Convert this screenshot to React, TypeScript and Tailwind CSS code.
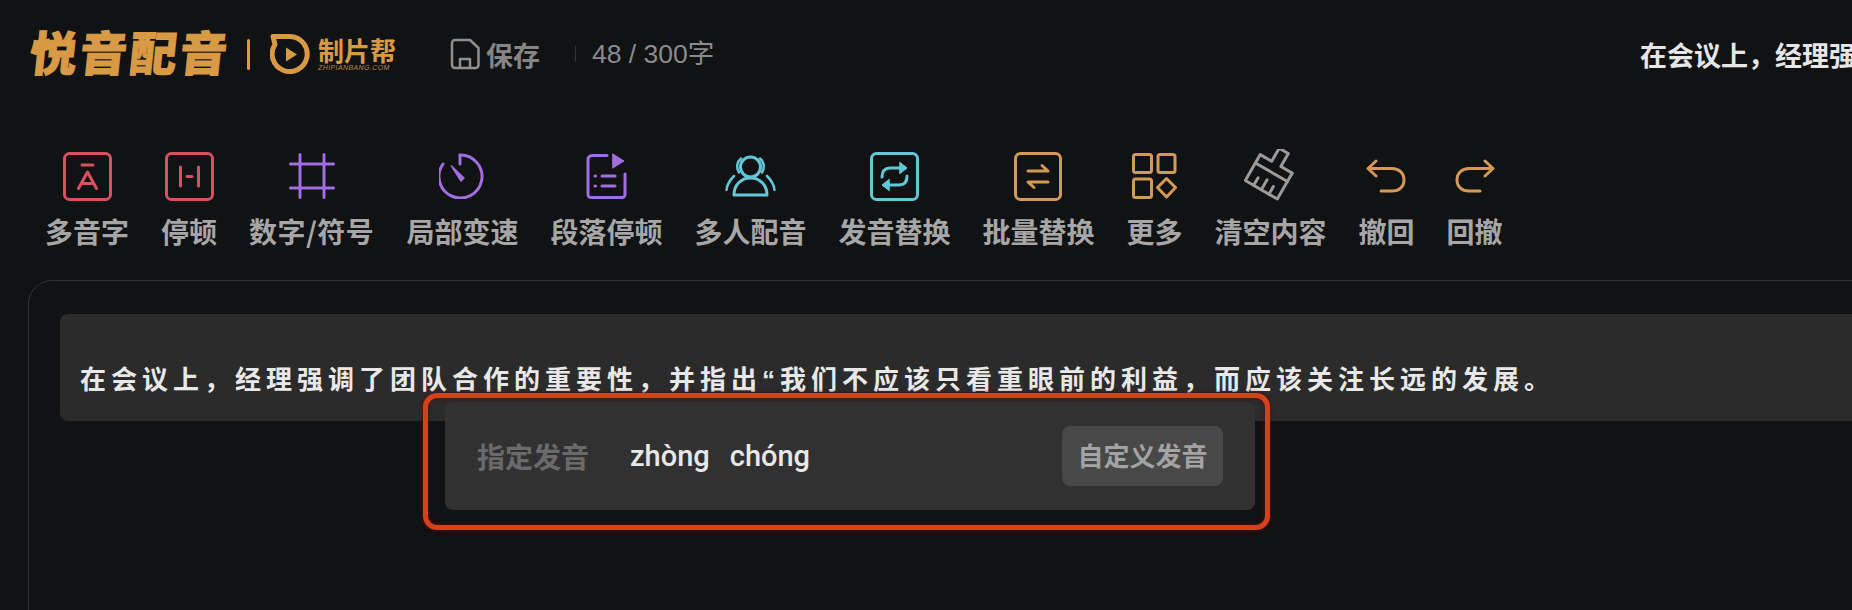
import React from "react";

const S = ({ w, h, vb, children, sw = 3, c }: { w: number; h: number; vb: string; children: React.ReactNode; sw?: number; c: string }) => (
  <svg width={w} height={h} viewBox={vb} fill="none" stroke={c} strokeWidth={sw} strokeLinecap="round" strokeLinejoin="round" className="shrink-0">
    {children}
  </svg>
);

const red = "#d9505f";
const purple = "#a06ee0";
const cyan = "#62c8d8";
const orange = "#d49a55";
const gray = "#9a9a9a";

const icons: Record<string, React.ReactNode> = {
  a: (
    <S w={49} h={49} vb="0 0 49 49" c={red}>
      <rect x="1.5" y="1.5" width="46" height="46" rx="5" />
      <path d="M19 13h11" />
      <path d="M15.500 36.500l9-16.500 9 16.500M18.500 31.500h12" />
    </S>
  ),
  pause: (
    <S w={49} h={49} vb="0 0 49 49" c={red}>
      <rect x="1.5" y="1.5" width="46" height="46" rx="5" />
      <path d="M15.500 15v19M33.500 15v19M22 24.500h5" />
    </S>
  ),
  hash: (
    <S w={46} h={46} vb="0 0 46 46" c={purple}>
      <path d="M11 1.5v43M35 1.5v43M1.5 11h43M1.5 35h43" />
    </S>
  ),
  clock: (
    <S w={46} h={46} vb="0 0 46 46" c={purple}>
      <path d="M21 2a21.500 21.500 0 1 1-17 9" />
      <path d="M21 2v9" />
      <path d="M12.500 13l12.500 12-3 3z" fill={purple} strokeWidth="1.500" />
    </S>
  ),
  doc: (
    <S w={41} h={46} vb="0 0 41 46" c={purple}>
      <path d="M21 2.500H6a4 4 0 0 0-4 4v35a3 3 0 0 0 3 3h31a3 3 0 0 0 3-3V21" />
      <path d="M27 1l11 7-11 7z" fill={purple} strokeWidth="1" />
      <path d="M16 23h13M16 33h13" />
      <path d="M9 23h.5M9 33h.5" />
    </S>
  ),
  people: (
    <S w={51} h={42} vb="0 0 51 42" c={cyan}>
      <circle cx="25.500" cy="12" r="10" />
      <path d="M9 40c0-10 7-17 16.500-17S42 30 42 40z" />
      <path d="M16 3.500c-4 3-5 9-2 14M35 3.500c4 3 5 9 2 14" strokeWidth="2.500" />
      <path d="M9 21C5 25 2 29 1.500 35M42 21c4 4 7 8 7.500 14" strokeWidth="2.500" />
    </S>
  ),
  replace: (
    <S w={49} h={49} vb="0 0 49 49" c={cyan}>
      <rect x="1.500" y="1.500" width="46" height="46" rx="5" />
      <path d="M12 25c0-6 3-9 8-9h15" />
      <path d="M30 10.500l7 5.500-7 5.500z" fill={cyan} strokeWidth="1" />
      <path d="M37 24c0 6-3 9-8 9H14" />
      <path d="M19 27.500l-7 5.500 7 5.500z" fill={cyan} strokeWidth="1" />
    </S>
  ),
  batch: (
    <S w={48} h={49} vb="0 0 48 49" c={orange}>
      <rect x="1.500" y="1.500" width="45" height="46" rx="5" />
      <path d="M14 19h20l-6-5.500M34 30H14l6 5.500" />
    </S>
  ),
  more: (
    <S w={45} h={46} vb="0 0 45 46" c={orange}>
      <rect x="1.500" y="1.500" width="18" height="18" rx="2" />
      <rect x="26" y="1.500" width="17" height="18" rx="2" />
      <rect x="1.500" y="26" width="18" height="18.500" rx="2" />
      <path d="M34.500 25.500l9 9-9 9.500-9-9.500z" />
    </S>
  ),
  brush: (
    <S w={52} h={54} vb="-27 -24 52 54" c={gray} sw={3.400}>
      <g transform="rotate(30) scale(.88)">
        <path d="M-6 -29H6V-12H21V22H-21V-12H-6Z" />
        <path d="M-21 -1H21" />
        <path d="M-10 22V12M0 22V9M10 22V12" />
      </g>
    </S>
  ),
  undo: (
    <S w={40} h={34} vb="0 0 40 34" c={orange}>
      <path d="M10 2L2 9.500l8 7.500" />
      <path d="M2.500 9.500H26c7 0 12 4.500 12 11.500s-5 11-12 11H15" />
    </S>
  ),
  redo: (
    <S w={40} h={34} vb="0 0 40 34" c={orange}>
      <path d="M30 2l8 7.500-8 7.500" />
      <path d="M37.500 9.500H14C7 9.500 2 14 2 21s5 11 12 11h11" />
    </S>
  ),
};

const items = [
  ["a", "多音字", ""],
  ["pause", "停顿", ""],
  ["hash", "数字/符号", "tracking-[0.500px]"],
  ["clock", "局部变速", ""],
  ["doc", "段落停顿", ""],
  ["people", "多人配音", ""],
  ["replace", "发音替换", ""],
  ["batch", "批量替换", ""],
  ["more", "更多", ""],
  ["brush", "清空内容", ""],
  ["undo", "撤回", ""],
  ["redo", "回撤", ""],
];

const sentence = "在会议上，经理强调了团队合作的重要性，并指出“我们不应该只看重眼前的利益，而应该关注长远的发展。";

export default function App() {
  return (
    <div className="relative w-[1852px] h-[610px] overflow-hidden bg-[#111214] font-['Noto_Sans_CJK_SC','Noto_Sans',sans-serif]">
      {/* header */}
      <header className="flex items-center h-[108px] pl-[30px] whitespace-nowrap">
        <span className="shrink-0 w-[197px] h-[56px] text-[47px] leading-[50px] font-black text-[#d99a45] tracking-[3px] -skew-x-6 [-webkit-text-stroke:1px_#d99a45]">悦音配音</span>
        <span className="shrink-0 ml-[20px] w-[3px] h-[31px] rounded-sm bg-[#d99a45]" />
        <svg className="shrink-0 ml-[20px]" width="40" height="40" viewBox="0 0 40 40" fill="none">
          <path d="M3 2.500h17a17.500 17.500 0 1 1-15 8z" stroke="#d99a45" strokeWidth="5" strokeLinejoin="round" />
          <path d="M16 13.500l11 7-11 7z" fill="#d99a45" />
        </svg>
        <span className="shrink-0 ml-[8px] flex flex-col items-start">
          <span className="text-[26px] leading-[28px] font-bold text-[#d99a45]">制片帮</span>
          <span className="text-[7px] leading-[8px] italic font-['Liberation_Sans',sans-serif] text-[#b58a4c] tracking-[0.400px]">ZHIPIANBANG.COM</span>
        </span>
        <svg className="shrink-0 ml-[54px]" width="30" height="32" viewBox="0 0 30 32" fill="none" stroke="#8f8f8f" strokeWidth="2.500" strokeLinejoin="round">
          <path d="M5 2h15l8.500 8v17a3 3 0 0 1-3 3H5a3 3 0 0 1-3-3V5a3 3 0 0 1 3-3z" />
          <path d="M10 30v-9h10v9" />
        </svg>
        <span className="shrink-0 ml-[6px] pt-[2px] text-[27px] font-bold text-[#858585]">保存</span>
        <span className="shrink-0 ml-[35px] w-px h-[16px] bg-[#333]" />
        <span className="shrink-0 ml-[16px] pt-[2px] text-[26.500px] text-[#8a8a8a] font-['Liberation_Sans','Noto_Sans_CJK_SC',sans-serif]">48 / 300字</span>
        <span className="ml-auto w-[212px] shrink-0 overflow-hidden pt-[2px] text-[27px] font-bold text-[#e6e6e6]">{sentence}</span>
      </header>

      {/* toolbar */}
      <nav className="flex items-start gap-[32px] pl-[45px] mt-[41px] h-[131px]">
        {items.map(([k, label, extra]) => (
          <div key={label} className="flex flex-col items-center whitespace-nowrap">
            <div className="h-[54px] flex items-center justify-center">{icons[k]}</div>
            <span className={`mt-[9px] text-[28px] leading-[38px] font-bold text-[#a6a6a6] ${extra}`}>{label}</span>
          </div>
        ))}
      </nav>

      {/* editor */}
      <main className="w-[1900px] h-[400px] ml-[28px] border border-[#333] rounded-tl-[24px] pl-[31px] pt-[33px]">
        <div className="h-[107px] rounded-lg bg-[#2b2b2b] pl-[20px] pt-[44px] whitespace-nowrap">
          <p className="text-[26px] leading-[44px] font-bold tracking-[5px] text-[#e8e8e8] font-['Liberation_Sans','Noto_Sans_CJK_SC',sans-serif]">{sentence}</p>
        </div>
      </main>

      {/* popover */}
      <div className="absolute left-[445px] top-[402px] w-[810px] h-[108px] rounded-lg bg-[#313131] flex items-center pl-[32px] pr-[32px]">
        <span className="text-[28px] font-bold text-[#6a6a6a]">指定发音</span>
        <span className="ml-[41px] pt-[2px] text-[29px] font-medium text-[#e8e8e8] font-['Roboto',sans-serif]">zhòng</span>
        <span className="ml-[20px] pt-[2px] text-[29px] font-medium text-[#e8e8e8] font-['Roboto',sans-serif]">chóng</span>
        <button className="ml-auto w-[161px] h-[60px] rounded-lg bg-[#484848] pb-[3px] text-[26px] font-bold text-[#a3a3a3]">自定义发音</button>
      </div>

      {/* annotation frame */}
      <div className="absolute left-[423px] top-[393px] w-[847px] h-[137px] rounded-[14px] border-[5px] border-[#d6401c] shadow-[0_0_4px_#5a0c0c,inset_0_0_4px_#5a0c0c]" />
    </div>
  );
}
